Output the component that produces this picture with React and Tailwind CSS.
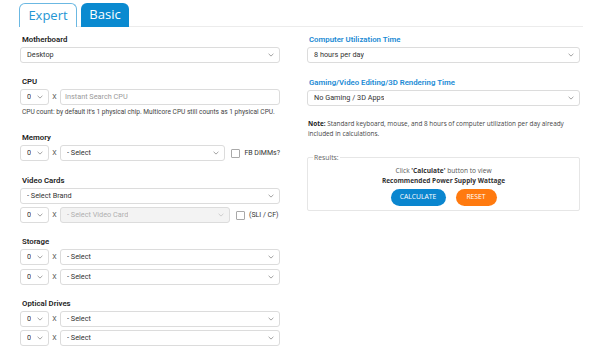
import React from "react";

const Chevron = ({ light }) => (
  <svg width="6" height="4" viewBox="0 0 6 4" className="shrink-0">
    <path d="M0.6 0.8 L3 3.1 L5.4 0.8" fill="none" stroke={light ? "#c4c4c4" : "#8a8a8a"} strokeWidth="0.8" />
  </svg>
);

const Select = ({ text, className = "", disabled = false }) => (
  <div
    className={`flex items-center justify-between border border-[#dcdcdc] rounded-[3px] pl-[6px] pr-[5px] h-[16px] text-[7.3px] ${
      disabled ? "bg-[#f3f3f3] text-[#b0b0b0]" : "bg-white text-[#333]"
    } ${className}`}
  >
    <span className="truncate">{text}</span>
    <Chevron light={disabled} />
  </div>
);

const Qty = () => <Select text="0" className="w-[29px] shrink-0" />;
const X = () => <span className="w-[11px] shrink-0 text-center text-[7px] text-[#555]">X</span>;

const Label = ({ children, blue }) => (
  <div className={`pl-[2px] text-[7.8px] font-semibold leading-[9px] mb-[3px] ${blue ? "text-[#1a8ad4]" : "text-[#222]"}`}>
    {children}
  </div>
);

const Check = ({ label }) => (
  <div className="flex items-center ml-[6px] shrink-0">
    <div className="w-[9px] h-[9px] border border-[#a9a9a9] rounded-[1px] bg-white" />
    <span className="ml-[4px] text-[7px] text-[#333]">{label}</span>
  </div>
);

const QtyRow = () => (
  <div className="flex items-center">
    <Qty />
    <X />
    <Select text="- Select" className="flex-1" />
  </div>
);

export default function App() {
  return (
    <div className="w-[600px] h-[350px] bg-white overflow-hidden" style={{ fontFamily: "Roboto, 'Liberation Sans', sans-serif" }}>
      <div className="flex items-end h-[27px] ml-[19px] mr-[17px] border-b border-[#ececec]" style={{ fontFamily: "'Open Sans', sans-serif" }}>
        <div className="w-[58px] h-[24px] mb-[-1px] border border-b-0 border-[#6bb8e2] bg-white rounded-t-[6px] flex items-center justify-center text-[13px] text-[#2596d4]">
          Expert
        </div>
        <div className="w-[48px] h-[24px] ml-[4px] mb-[-1px] bg-[#0a8ad0] rounded-t-[6px] flex items-center justify-center text-[13px] text-white">
          Basic
        </div>
      </div>

      <div className="flex ml-[20px] gap-[27px] mt-[8px]">
        {/* left column */}
        <div className="w-[260px] flex flex-col">
          <Label>Motherboard</Label>
          <Select text="Desktop" />

          <div className="mt-[14px]">
            <Label>CPU</Label>
            <div className="flex items-center">
              <Qty />
              <X />
              <div className="flex-1 h-[16px] border border-[#dcdcdc] rounded-[3px] flex items-center pl-[4px] text-[7.3px] text-[#9a9a9a]">
                Instant Search CPU
              </div>
            </div>
            <div className="whitespace-nowrap text-[6.6px] leading-[9px] text-[#444] mt-[3px] pl-[2px]">
              CPU count: by default it's 1 physical chip. Multicore CPU still counts as 1 physical CPU.
            </div>
          </div>

          <div className="mt-[16px]">
            <Label>Memory</Label>
            <div className="flex items-center">
              <Qty />
              <X />
              <Select text="- Select" className="w-[170px]" />
              <Check label="FB DIMMs?" />
            </div>
          </div>

          <div className="mt-[15px]">
            <Label>Video Cards</Label>
            <Select text="- Select Brand" />
            <div className="flex items-center mt-[3px]">
              <Qty />
              <X />
              <Select text="- Select Video Card" className="w-[170px]" disabled />
              <Check label="(SLI / CF)" />
            </div>
          </div>

          <div className="mt-[14px]">
            <Label>Storage</Label>
            <div className="flex flex-col gap-[4px]">
              <QtyRow />
              <QtyRow />
            </div>
          </div>

          <div className="mt-[14px]">
            <Label>Optical Drives</Label>
            <div className="flex flex-col gap-[3px]">
              <QtyRow />
              <QtyRow />
            </div>
          </div>
        </div>

        {/* right column */}
        <div className="w-[273px] flex flex-col">
          <Label blue>Computer Utilization Time</Label>
          <Select text="8 hours per day" />
          <div className="mt-[15px]">
            <Label blue>Gaming/Video Editing/3D Rendering Time</Label>
            <Select text="No Gaming / 3D Apps" />
          </div>
          <div className="mt-[13px] pl-[1px] text-[6.4px] leading-[10px] text-[#444]" style={{ fontFamily: "'Open Sans', sans-serif" }}>
            <span className="font-bold text-[#222]">Note:</span> Standard keyboard, mouse, and 8 hours of computer utilization per day already included in calculations.
          </div>
          <div className="relative mt-[18px] border border-[#e6e6e6] rounded-[2px] h-[54px] flex flex-col items-center pt-[8px]" style={{ fontFamily: "'Open Sans', sans-serif" }}>
            <span className="absolute -top-[5px] left-[5px] bg-white px-[1px] text-[6.8px] leading-[9px] text-[#666]">Results:</span>
            <div className="text-[6.6px] leading-[10px] text-[#555]">
              Click <span className="font-bold text-[#333]">'Calculate'</span> button to view
            </div>
            <div className="text-[6.5px] leading-[10px] font-bold text-[#333]">Recommended Power Supply Wattage</div>
            <div className="flex gap-[10px] mt-[3px]">
              <div className="w-[55px] h-[17px] rounded-full bg-[#0a86cf] text-white text-[6.8px] flex items-center justify-center">CALCULATE</div>
              <div className="w-[41px] h-[17px] rounded-full bg-[#ff7a0f] text-white text-[6.8px] flex items-center justify-center">RESET</div>
            </div>
          </div>
        </div>
      </div>
    </div>
  );
}
